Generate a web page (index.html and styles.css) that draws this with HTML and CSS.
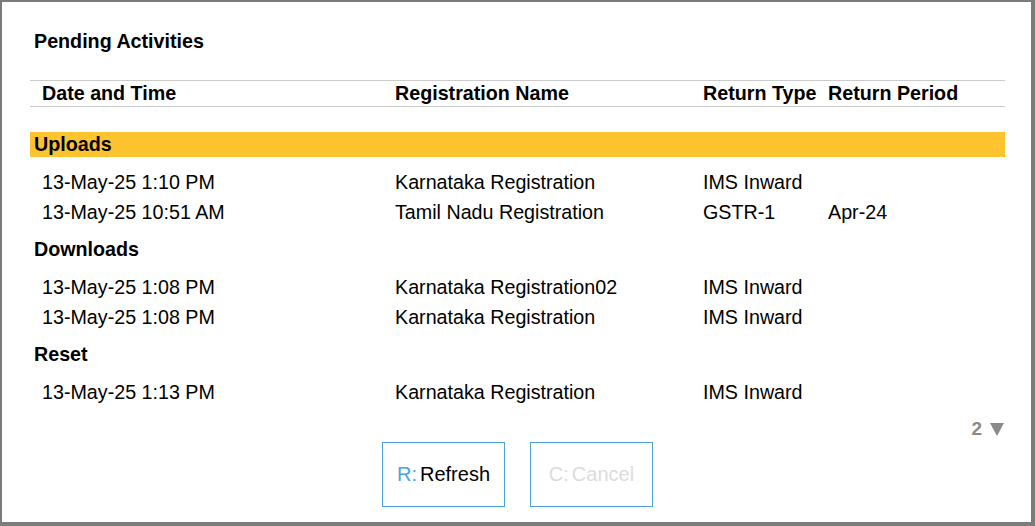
FILE: index.html
```html
<!DOCTYPE html>
<html>
<head>
<meta charset="utf-8">
<link rel="stylesheet" href="styles.css">
</head>
<body>
<div class="window">
  <div class="title">Pending Activities</div>
  <div class="thead row">
    <div class="c1">Date and Time</div>
    <div class="c2">Registration Name</div>
    <div class="c3">Return Type</div>
    <div class="c4">Return Period</div>
  </div>
  <div class="groups">
    <div class="group">
      <div class="ghead active">Uploads</div>
      <div class="rows">
        <div class="row"><div class="c1">13-May-25 1:10 PM</div><div class="c2">Karnataka Registration</div><div class="c3">IMS Inward</div><div class="c4"></div></div>
        <div class="row"><div class="c1">13-May-25 10:51 AM</div><div class="c2">Tamil Nadu Registration</div><div class="c3">GSTR-1</div><div class="c4">Apr-24</div></div>
      </div>
    </div>
    <div class="group">
      <div class="ghead">Downloads</div>
      <div class="rows">
        <div class="row"><div class="c1">13-May-25 1:08 PM</div><div class="c2">Karnataka Registration02</div><div class="c3">IMS Inward</div><div class="c4"></div></div>
        <div class="row"><div class="c1">13-May-25 1:08 PM</div><div class="c2">Karnataka Registration</div><div class="c3">IMS Inward</div><div class="c4"></div></div>
      </div>
    </div>
    <div class="group">
      <div class="ghead">Reset</div>
      <div class="rows">
        <div class="row"><div class="c1">13-May-25 1:13 PM</div><div class="c2">Karnataka Registration</div><div class="c3">IMS Inward</div><div class="c4"></div></div>
      </div>
    </div>
  </div>
  <div class="pager">
    <span class="pnum">2</span>
    <svg class="parrow" width="14" height="13" viewBox="0 0 14 13"><polygon points="0,0 14,0 7,13" fill="#8a8a8a"/></svg>
  </div>
  <div class="buttons">
    <div class="btn"><span class="key">R:</span>Refresh</div>
    <div class="btn disabled"><span class="key">C:</span>Cancel</div>
  </div>
</div>
</body>
</html>
```

FILE: styles.css
```css
html, body {
  margin: 0;
  padding: 0;
  background: #ffffff;
}

.window {
  width: 1035px;
  height: 526px;
  box-sizing: border-box;
  border-style: solid;
  border-color: #7b7b7b;
  border-width: 2px 4px 4px 2px;
  padding: 27px 26px 0 28px;
  font-family: "Liberation Sans", Arial, sans-serif;
  font-size: 19.7px;
  color: #000;
  background: #fff;
}

.title {
  font-weight: bold;
  line-height: 24px;
  padding-left: 4px;
  margin-bottom: 27px;
}

.row {
  display: flex;
  line-height: 30px;
  height: 30px;
}

.c1 { width: 353px; padding-left: 12px; }
.c2 { width: 308px; }
.c3 { width: 125px; }
.c4 { flex: 1; }

.thead {
  border-top: 1px solid #cbcbcb;
  border-bottom: 1px solid #cbcbcb;
  height: 25px;
  line-height: 25px;
  font-weight: bold;
}

.groups {
  margin-top: 25px;
}

.group {
  margin-bottom: 10px;
}

.ghead {
  height: 25px;
  line-height: 25px;
  font-weight: bold;
  padding-left: 4px;
  margin-bottom: 10px;
}

.ghead.active {
  background: #fec430;
}

.pager {
  display: flex;
  justify-content: flex-end;
  align-items: center;
  gap: 8px;
  height: 20px;
  margin-top: 12px;
  padding-right: 1px;
  color: #8a8a8a;
  font-weight: bold;
  font-size: 19px;
}

.parrow {
  display: block;
}

.buttons {
  display: flex;
  justify-content: center;
  gap: 25px;
  margin-top: 3px;
}

.btn {
  width: 123px;
  height: 65px;
  box-sizing: border-box;
  border: 1px solid #4aa3df;
  display: flex;
  align-items: center;
  justify-content: center;
  font-size: 20px;
  color: #000;
}

.btn .key {
  color: #4aa3df;
  margin-right: 3px;
}

.btn.disabled,
.btn.disabled .key {
  color: #dcdcdc;
}
```
